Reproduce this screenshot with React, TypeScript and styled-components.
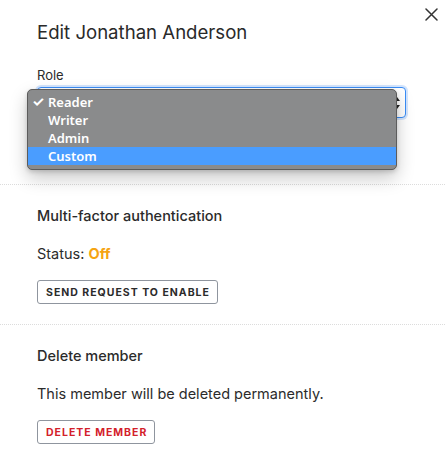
import React from "react";
import styled, { createGlobalStyle } from "styled-components";

const Global = createGlobalStyle`
  html, body { margin: 0; padding: 0; background: #fff; }
  body { font-family: Inter, "Noto Sans", sans-serif; color: #2b2b2b; -webkit-font-smoothing: antialiased; }
`;

const Modal = styled.div`
  position: relative;
  width: 445px;
  min-height: 461px;
  background: #fff;
`;

const CloseButton = styled.button`
  position: absolute;
  top: 6px;
  right: 6px;
  width: 16px;
  height: 16px;
  padding: 0;
  border: 0;
  background: transparent;
  display: flex;
  align-items: center;
  justify-content: center;
`;

const Header = styled.div`
  padding: 20px 39px 66px 37px;
`;

const Title = styled.h1`
  margin: 0;
  font-size: 18.6px;
  line-height: 24px;
  font-weight: 400;
  color: #2a2a2a;
`;

const Label = styled.div`
  margin-top: 23px;
  font-size: 13px;
  line-height: 16px;
  color: #2b2b2b;
`;

const SelectWrap = styled.div`
  position: relative;
  margin-top: 4px;
`;

const SelectBox = styled.div`
  height: 29px;
  border: 1px solid #3a8df6;
  border-radius: 4px;
  box-shadow: 0 0 0 2px rgba(80, 150, 250, 0.25);
  display: flex;
  align-items: center;
  justify-content: flex-end;
  padding-right: 4px;
  background: #fff;
`;

const Menu = styled.ul`
  position: absolute;
  left: -10px;
  top: 2px;
  width: 368px;
  margin: 0;
  padding: 3px 0 4px;
  list-style: none;
  background: #8a8b8c;
  border: 1px solid #5c5c5c;
  border-radius: 5px;
  box-shadow: 0 8px 18px rgba(0, 0, 0, 0.22), 0 2px 4px rgba(0, 0, 0, 0.15);
  font-family: "Noto Sans", Inter, sans-serif;
`;

const Item = styled.li<{ $active?: boolean }>`
  position: relative;
  height: 18px;
  line-height: 18px;
  padding-left: 20px;
  font-size: 13px;
  font-weight: 600;
  color: #fff;
  background: ${(p) => (p.$active ? "#4a9dff" : "transparent")};
`;

const Check = styled.span`
  position: absolute;
  left: 4px;
  top: 0;
  font-size: 14px;
  font-weight: 700;
`;

const Section = styled.section`
  border-top: 1px dotted #dcdcdc;
  padding: 23px 39px 20px 37px;
`;

const SectionTitle = styled.h2`
  margin: 0;
  font-size: 14.5px;
  line-height: 16px;
  font-weight: 500;
  color: #2b2b2b;
`;

const Text = styled.p`
  margin: 22px 0 0;
  font-size: 14.5px;
  line-height: 16px;
  color: #2b2b2b;
`;

const Off = styled.span`
  color: #f5a412;
  font-weight: 700;
`;

const Button = styled.button<{ $danger?: boolean }>`
  margin-top: 18px;
  height: 24px;
  padding: 0 7px 0 8px;
  border: 1px solid #8f959e;
  border-radius: 3px;
  background: #fff;
  font-family: Inter, sans-serif;
  font-size: 10.5px;
  font-weight: 700;
  letter-spacing: 1px;
  color: ${(p) => (p.$danger ? "#d3202a" : "#2b2b2b")};
  display: block;
`;

export default function App() {
  return (
    <Modal>
      <Global />
      <CloseButton aria-label="Close">
        <svg width="13" height="13" viewBox="0 0 13 13">
          <path d="M1 1L12 12M12 1L1 12" stroke="#333" strokeWidth="1.5" strokeLinecap="round" />
        </svg>
      </CloseButton>
      <Header>
        <Title>Edit Jonathan Anderson</Title>
        <Label>Role</Label>
        <SelectWrap>
          <SelectBox>
            <svg width="8" height="14" viewBox="0 0 8 14">
              <path d="M4 1L7 5H1Z M4 13L7 9H1Z" fill="#222" />
            </svg>
          </SelectBox>
          <Menu>
            <Item>
              <Check>✓</Check>Reader
            </Item>
            <Item>Writer</Item>
            <Item>Admin</Item>
            <Item $active>Custom</Item>
          </Menu>
        </SelectWrap>
      </Header>
      <Section>
        <SectionTitle>Multi-factor authentication</SectionTitle>
        <Text>
          Status: <Off>Off</Off>
        </Text>
        <Button>SEND REQUEST TO ENABLE</Button>
      </Section>
      <Section>
        <SectionTitle>Delete member</SectionTitle>
        <Text>This member will be deleted permanently.</Text>
        <Button $danger>DELETE MEMBER</Button>
      </Section>
    </Modal>
  );
}
